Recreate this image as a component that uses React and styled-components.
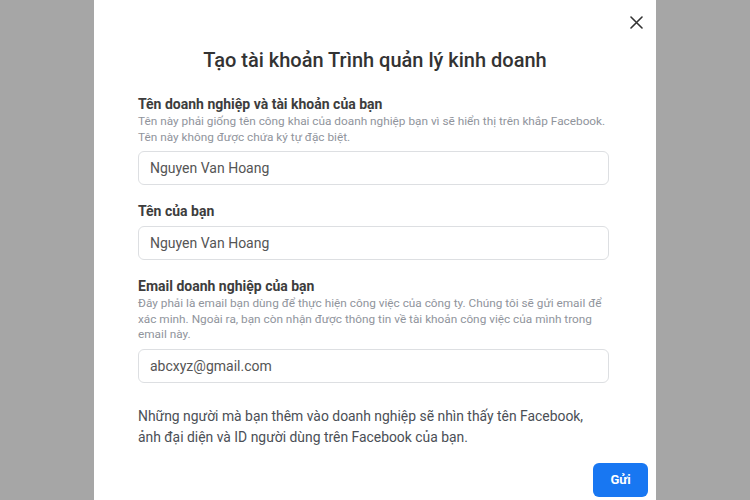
import React from 'react';
import styled, { createGlobalStyle } from 'styled-components';

const GlobalStyle = createGlobalStyle`
  body {
    margin: 0;
    background: #a6a6a6;
    font-family: Roboto, "Liberation Sans", Arial, sans-serif;
  }
`;

const Page = styled.div`
  height: 500px;
  display: flex;
  justify-content: center;
  overflow: hidden;
`;

const Modal = styled.div`
  width: 562px;
  height: 500px;
  background: #fff;
  display: flex;
  flex-direction: column;
`;

const TopBar = styled.div`
  display: flex;
  justify-content: flex-end;
  padding: 10px 8px 0 0;
`;

const CloseButton = styled.button`
  width: 24px;
  height: 24px;
  margin: 0;
  padding: 0;
  border: 0;
  background: none;
  display: flex;
  align-items: center;
  justify-content: center;
  cursor: pointer;
`;

const Title = styled.h2`
  margin: 13px 0 0;
  font-size: 20px;
  line-height: 26px;
  font-weight: 500;
  color: #333;
  text-align: center;
`;

const Body = styled.div`
  padding: 22px 47px 0 44px;
`;

const Field = styled.div`
  margin-bottom: 17px;
`;

const Label = styled.div`
  font-size: 14px;
  line-height: 18px;
  font-weight: 700;
  color: #3d3d3d;
  margin-bottom: ${props => (props.withHint ? '1px' : '6px')};
`;

const Hint = styled.div`
  font-size: 11.8px;
  line-height: 15.5px;
  color: #90949c;
  margin-bottom: 6px;
`;

const Input = styled.input`
  box-sizing: border-box;
  display: block;
  width: 100%;
  height: 34px;
  margin: 0;
  padding: 0 11px;
  border: 1px solid #dddfe2;
  border-radius: 6px;
  background: #fff;
  font-family: inherit;
  font-size: 14px;
  color: #555;
  outline: none;
`;

const Note = styled.p`
  margin: 23px 0 0;
  font-size: 13.9px;
  line-height: 21px;
  color: #4b4f56;
`;

const Footer = styled.div`
  display: flex;
  justify-content: flex-end;
  padding: 15px 8px 0 0;
`;

const SubmitButton = styled.button`
  width: 55px;
  height: 34px;
  border: 0;
  border-radius: 6px;
  background: #1877f2;
  color: #fff;
  font-family: inherit;
  font-size: 13px;
  font-weight: 700;
  cursor: pointer;
`;

function CloseIcon() {
  return (
    <svg width="13" height="13" viewBox="0 0 13 13">
      <path d="M1 1L12 12M12 1L1 12" stroke="#333" strokeWidth="1.6" strokeLinecap="round" />
    </svg>
  );
}

const fields = [
  {
    label: 'Tên doanh nghiệp và tài khoản của bạn',
    hint: 'Tên này phải giống tên công khai của doanh nghiệp bạn vì sẽ hiển thị trên khắp Facebook. Tên này không được chứa ký tự đặc biệt.',
    value: 'Nguyen Van Hoang',
  },
  {
    label: 'Tên của bạn',
    value: 'Nguyen Van Hoang',
  },
  {
    label: 'Email doanh nghiệp của bạn',
    hint: 'Đây phải là email bạn dùng để thực hiện công việc của công ty. Chúng tôi sẽ gửi email để xác minh. Ngoài ra, bạn còn nhận được thông tin về tài khoản công việc của mình trong email này.',
    value: 'abcxyz@gmail.com',
  },
];

export default function App() {
  return (
    <Page>
      <GlobalStyle />
      <Modal>
        <TopBar>
          <CloseButton aria-label="close">
            <CloseIcon />
          </CloseButton>
        </TopBar>
        <Title>Tạo tài khoản Trình quản lý kinh doanh</Title>
        <Body>
          {fields.map(f => (
            <Field key={f.label}>
              <Label withHint={!!f.hint}>{f.label}</Label>
              {f.hint && <Hint>{f.hint}</Hint>}
              <Input readOnly value={f.value} />
            </Field>
          ))}
          <Note>
            Những người mà bạn thêm vào doanh nghiệp sẽ nhìn thấy tên Facebook,
            ảnh đại diện và ID người dùng trên Facebook của bạn.
          </Note>
        </Body>
        <Footer>
          <SubmitButton>Gửi</SubmitButton>
        </Footer>
      </Modal>
    </Page>
  );
}
